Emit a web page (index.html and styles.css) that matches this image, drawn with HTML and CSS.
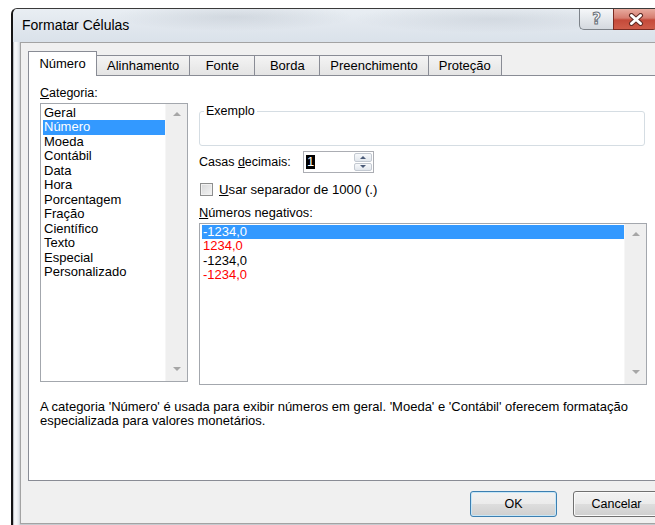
FILE: index.html
```html
<!DOCTYPE html>
<html lang="pt-BR">
<head>
<meta charset="utf-8">
<title>Formatar Células</title>
<link rel="stylesheet" href="styles.css">
</head>
<body>
<div class="window">
  <div class="titlebar">
    <span class="title">Formatar Células</span>
    <div class="caption">
      <div class="cap-btn cap-help"><span>?</span></div>
      <div class="cap-btn cap-close">
        <svg width="16" height="13" viewBox="0 0 16 13">
          <path d="M3.5 2.5 L12.5 10.5 M12.5 2.5 L3.5 10.5" stroke="#5e2a24" stroke-width="5" stroke-linecap="round"/>
          <path d="M3.5 2.5 L12.5 10.5 M12.5 2.5 L3.5 10.5" stroke="#ffffff" stroke-width="3" stroke-linecap="round"/>
        </svg>
      </div>
    </div>
  </div>

  <div class="client">
    <div class="tabs">
      <div class="tab active">Número</div>
      <div class="tab">Alinhamento</div>
      <div class="tab">Fonte</div>
      <div class="tab">Borda</div>
      <div class="tab">Preenchimento</div>
      <div class="tab">Proteção</div>
    </div>

    <div class="panel">
      <div class="panel-cols">
        <div class="col-cat">
          <div class="label"><u>C</u>ategoria:</div>
          <div class="listbox cat-list">
            <div class="items">
              <div class="item">Geral</div>
              <div class="item selected">Número</div>
              <div class="item">Moeda</div>
              <div class="item">Contábil</div>
              <div class="item">Data</div>
              <div class="item">Hora</div>
              <div class="item">Porcentagem</div>
              <div class="item">Fração</div>
              <div class="item">Científico</div>
              <div class="item">Texto</div>
              <div class="item">Especial</div>
              <div class="item">Personalizado</div>
            </div>
            <div class="vscroll"><span class="arrow up"></span><span class="arrow down"></span></div>
          </div>
        </div>

        <div class="col-opts">
          <fieldset class="sample"><legend>Exemplo</legend></fieldset>

          <div class="row decimals">
            <label>Casas <u>d</u>ecimais:</label>
            <div class="spin">
              <div class="spin-field"><span class="sel">1</span></div>
              <div class="spin-btns">
                <div class="spin-btn"><span class="tri up"></span></div>
                <div class="spin-btn"><span class="tri down"></span></div>
              </div>
            </div>
          </div>

          <div class="row check">
            <span class="checkbox"></span>
            <span class="check-text"><u>U</u>sar separador de 1000 (.)</span>
          </div>

          <div class="label neg-label"><u>N</u>úmeros negativos:</div>
          <div class="listbox neg-list">
            <div class="items">
              <div class="item selected">-1234,0</div>
              <div class="item red">1234,0</div>
              <div class="item">-1234,0</div>
              <div class="item red">-1234,0</div>
            </div>
            <div class="vscroll"><span class="arrow up"></span><span class="arrow down"></span></div>
          </div>
        </div>
      </div>

      <p class="desc">A categoria 'Número' é usada para exibir números em geral. 'Moeda' e 'Contábil' oferecem formatação<br>especializada para valores monetários.</p>
    </div>

    <div class="buttons">
      <button class="btn default">OK</button>
      <button class="btn">Cancelar</button>
    </div>
  </div>
</div>
</body>
</html>
```

FILE: styles.css
```css
html, body {
  margin: 0;
}

body {
  width: 655px;
  height: 525px;
  overflow: hidden;
  background: #ffffff;
  font-family: "Liberation Sans", Arial, sans-serif;
  font-size: 12.5px;
  color: #000;
}

u {
  text-decoration: underline;
  text-underline-offset: 1px;
}

/* ---------- window frame ---------- */
.window {
  box-sizing: border-box;
  margin: 8px 0 0 11px;
  width: 663px;
  height: 530px;
  border-left: 2px solid #151515;
  border-top: 1px solid #3a3a3a;
  border-top-left-radius: 6px;
  background: linear-gradient(90deg, #8e9297 0, #eef1f4 1px, #f8f9fa 3px, #e2e6ea 6px, #c6cacf 7px);
}

.titlebar {
  height: 33px;
  display: flex;
  justify-content: space-between;
  align-items: flex-start;
  padding: 0 16px 0 9px;
  border-top-left-radius: 5px;
  background:
    radial-gradient(ellipse 120px 14px at 220px 8px, rgba(150, 160, 172, 0.25), rgba(150, 160, 172, 0)),
    radial-gradient(ellipse 140px 14px at 480px 10px, rgba(150, 160, 172, 0.22), rgba(150, 160, 172, 0)),
    linear-gradient(180deg, #e9eef3 0%, #e1e7ee 50%, #dae2ea 100%);
}

.title {
  font-size: 14px;
  line-height: 33px;
  color: #000;
}

.caption {
  display: flex;
}

.cap-btn {
  box-sizing: border-box;
  height: 21px;
  display: flex;
  align-items: center;
  justify-content: center;
}

.cap-help {
  width: 34px;
  border: 1px solid #7d838a;
  border-top: none;
  border-right: none;
  border-bottom-left-radius: 5px;
  background: linear-gradient(180deg, #f5f7f9 0%, #e4e8ec 50%, #d4d9df 100%);
}

.cap-help span {
  font-family: "DejaVu Sans", sans-serif;
  font-weight: bold;
  font-size: 15px;
  color: #ffffff;
  -webkit-text-stroke: 1px #6a717a;
  line-height: 1;
}

.cap-close {
  width: 45px;
  border: 1px solid #7b2b22;
  border-top: none;
  border-bottom-right-radius: 5px;
  background: linear-gradient(180deg, #e8ab9f 0%, #d67d70 45%, #c44a3a 55%, #cf5d4a 100%);
}

/* ---------- dialog client area ---------- */
.client {
  box-sizing: border-box;
  margin-left: 7px;
  width: 648px;
  height: 482px;
  border: 1px solid #a3a3a3;
  background: #f0f0f0;
  padding: 8px 7px 0 7px;
}

.tabs {
  display: flex;
  align-items: flex-end;
  height: 24px;
  position: relative;
  z-index: 1;
}

.tab {
  box-sizing: border-box;
  height: 20px;
  min-width: 66px;
  padding: 0 10px;
  border: 1px solid #898c95;
  border-bottom: none;
  margin-left: -1px;
  background: linear-gradient(180deg, #f4f4f4 0%, #ececec 50%, #e4e4e4 100%);
  font-size: 13px;
  line-height: 19px;
  text-align: center;
  white-space: nowrap;
}

.tab.active {
  margin-left: 0;
  width: 69px;
  height: 25px;
  margin-bottom: -1px;
  line-height: 24px;
  background: #ffffff;
}

.panel {
  box-sizing: border-box;
  height: 406px;
  border: 1px solid #898c95;
  background: #ffffff;
  padding: 10px 12px 0 11px;
}

.panel-cols {
  display: flex;
  gap: 11px;
  align-items: flex-start;
}

.label {
  line-height: 14px;
}

.col-cat {
  width: 148px;
}

.col-opts {
  flex: 1;
}

/* ---------- list boxes ---------- */
.listbox {
  box-sizing: border-box;
  display: flex;
  margin-top: 3px;
  border: 1px solid #a3a7ad;
  background: #ffffff;
}

.cat-list {
  height: 279px;
}

.neg-list {
  height: 162px;
}

.items {
  flex: 1;
  padding: 1px 0 0 2px;
}

.cat-list .items {
  padding-top: 2px;
}

.item {
  font-size: 13px;
  line-height: 14.45px;
  padding-left: 1px;
  white-space: nowrap;
}

.item.selected {
  background: #3399ff;
  color: #ffffff;
}

.item.red {
  color: #ff0000;
}

.vscroll {
  box-sizing: border-box;
  width: 22px;
  display: flex;
  flex-direction: column;
  justify-content: space-between;
  align-items: center;
  padding: 8px 0 10px;
  background: #efefef;
  border-left: 1px solid #f6f6f6;
}

.arrow {
  width: 0;
  height: 0;
  border-left: 4px solid transparent;
  border-right: 4px solid transparent;
}

.arrow.up {
  border-bottom: 4px solid #a6a6a6;
}

.arrow.down {
  border-top: 4px solid #a6a6a6;
}

/* ---------- sample group ---------- */
.sample {
  box-sizing: border-box;
  width: 446px;
  height: 42px;
  margin: 18px 0 0;
  padding: 0 0 0 4px;
  border: 1px solid #d5dde3;
  border-radius: 3px;
}

.sample legend {
  padding: 0 2px;
  line-height: 14px;
}

/* ---------- decimal places ---------- */
.row {
  display: flex;
  align-items: center;
}

.decimals {
  margin-top: 5px;
  height: 22px;
}

.decimals label {
  width: 104px;
}

.spin {
  box-sizing: border-box;
  width: 71px;
  height: 22px;
  display: flex;
  border: 1px solid #abadb3;
  background: #ffffff;
}

.spin-field {
  flex: 1;
  padding: 3px 0 0 2px;
}

.sel {
  display: inline-block;
  padding: 0 1px;
  background: #000000;
  color: #ffffff;
  font-size: 13px;
  line-height: 14px;
}

.spin-btns {
  box-sizing: border-box;
  width: 19px;
  display: flex;
  flex-direction: column;
  gap: 1px;
  padding: 1px 1px 1px 0;
}

.spin-btn {
  flex: 1;
  display: flex;
  align-items: center;
  justify-content: center;
  border: 1px solid #c3c9d1;
  border-radius: 2px;
  background: linear-gradient(180deg, #f7f9fb 0%, #e2e7ed 100%);
}

.tri {
  width: 0;
  height: 0;
  border-left: 3px solid transparent;
  border-right: 3px solid transparent;
}

.tri.up {
  border-bottom: 3px solid #4b5b78;
}

.tri.down {
  border-top: 3px solid #4b5b78;
}

/* ---------- thousands separator ---------- */
.check {
  margin-top: 9px;
  height: 15px;
  gap: 6px;
  padding-left: 1px;
}

.check-text {
  font-size: 13.2px;
}

.checkbox {
  box-sizing: border-box;
  width: 13px;
  height: 13px;
  border: 1px solid #8e8f8f;
  background: linear-gradient(135deg, #d7d8d9 0%, #f4f4f4 100%);
  box-shadow: inset 0 0 0 1px #f1f1f1;
}

.neg-label {
  margin-top: 9px;
  font-size: 12.8px;
}

/* ---------- description ---------- */
.desc {
  margin: 15px 0 0;
  font-size: 13px;
  line-height: 14px;
  white-space: nowrap;
}

/* ---------- buttons ---------- */
.buttons {
  display: flex;
  justify-content: flex-end;
  gap: 16px;
  margin-top: 10px;
}

.btn {
  box-sizing: border-box;
  width: 87px;
  height: 26px;
  padding: 0;
  border: 1px solid #707070;
  border-radius: 3px;
  background: linear-gradient(180deg, #f2f2f2 0%, #ebebeb 50%, #dddddd 51%, #cfcfcf 100%);
  box-shadow: inset 0 0 0 1px #fafafa;
  font-family: inherit;
  font-size: 12.5px;
  color: #000;
}

.btn.default {
  border-color: #3c7fb1;
  box-shadow: inset 0 0 0 1px #c6e6f7;
}
```
